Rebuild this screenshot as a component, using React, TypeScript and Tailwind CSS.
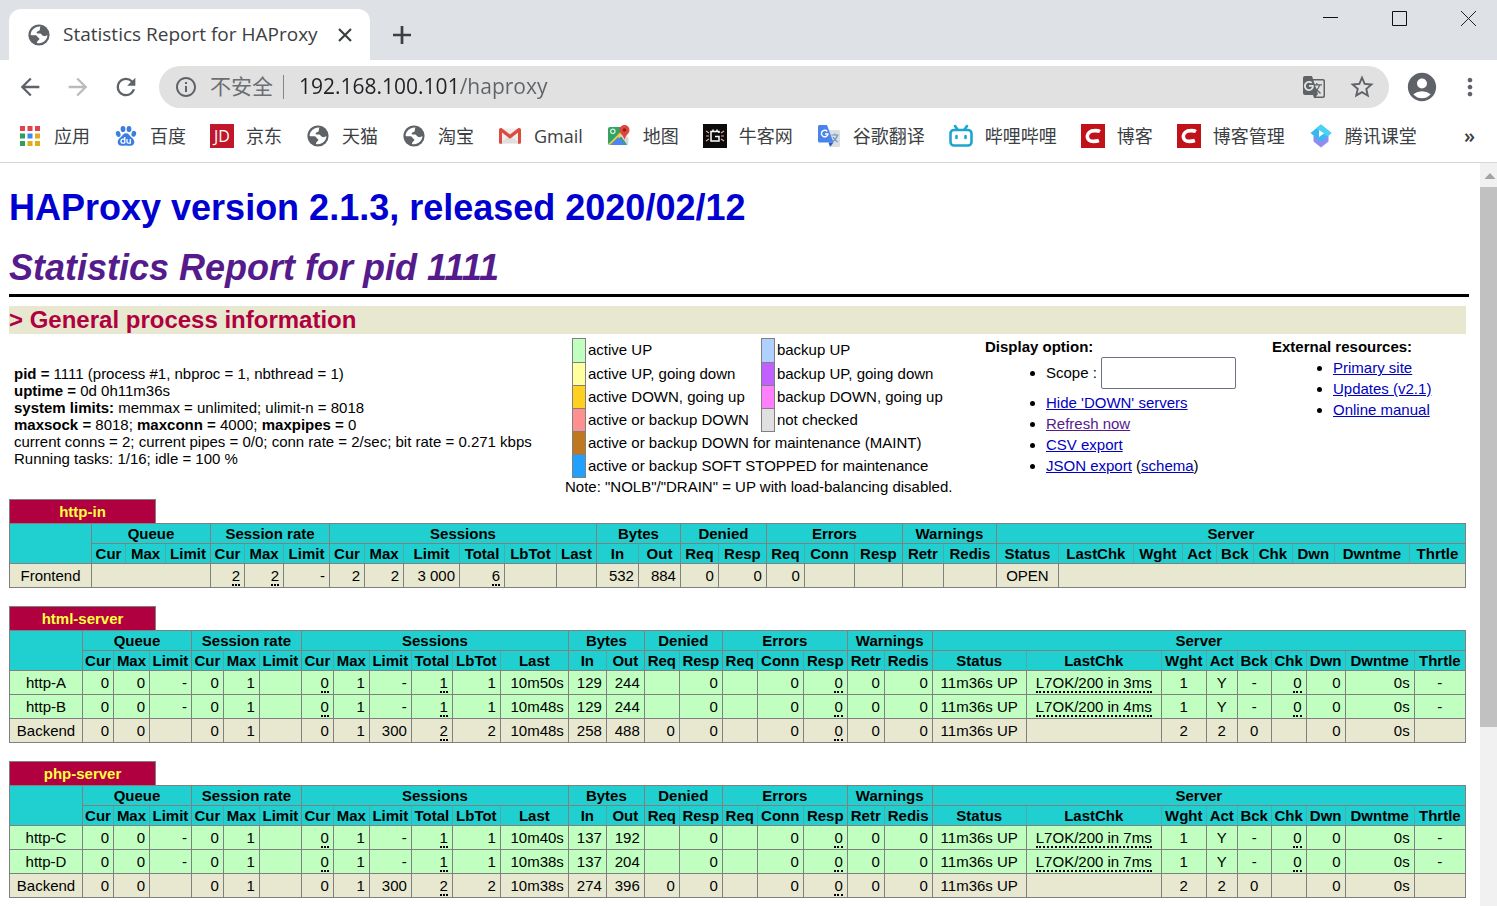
import type { ReactNode } from 'react';
import {
  MdArrowBack,
  MdArrowForward,
  MdAccountCircle,
  MdGTranslate,
  MdInfoOutline,
  MdMoreVert,
  MdRefresh,
  MdStarBorder,
} from 'react-icons/md';

interface Bookmark {
  label: string;
  icon: ReactNode;
}

interface Cell {
  text?: string;
  span?: number;
  center?: boolean;
  tip?: boolean;
}

interface Row {
  name: string;
  up: boolean;
  cells: Cell[];
}

interface Proxy {
  name: string;
  widths: number[];
  rows: Row[];
}

const headerGroups = [
  { label: 'Queue', cols: ['Cur', 'Max', 'Limit'] },
  { label: 'Session rate', cols: ['Cur', 'Max', 'Limit'] },
  { label: 'Sessions', cols: ['Cur', 'Max', 'Limit', 'Total', 'LbTot', 'Last'] },
  { label: 'Bytes', cols: ['In', 'Out'] },
  { label: 'Denied', cols: ['Req', 'Resp'] },
  { label: 'Errors', cols: ['Req', 'Conn', 'Resp'] },
  { label: 'Warnings', cols: ['Retr', 'Redis'] },
  { label: 'Server', cols: ['Status', 'LastChk', 'Wght', 'Act', 'Bck', 'Chk', 'Dwn', 'Dwntme', 'Thrtle'] },
];

// relative column widths, turned into percentages in StatsTable
const frontendWidths = [
  82, 34, 40, 45, 34, 39, 46, 35, 39, 56, 45, 52, 40, 42, 42, 38, 48, 38, 50, 48, 41, 53, 62, 75, 49, 34, 37, 39, 42, 75, 56,
];
const serverWidths = [
  73, 31, 36, 42, 32, 36, 42, 32, 36, 42, 41, 48, 68, 38, 38, 35, 43, 35, 46, 44, 37, 48, 94, 135, 45, 31, 34, 35, 39, 69, 51,
];

const n = (text = ''): Cell => ({ text });
const c = (text = ''): Cell => ({ text, center: true });
const tip = (text: string): Cell => ({ text, tip: true });

function serverRow(name: string, last: string, bytesIn: string, bytesOut: string, check: string): Row {
  return {
    name,
    up: true,
    cells: [
      n('0'), n('0'), n('-'), n('0'), n('1'), n(),
      tip('0'), n('1'), n('-'), tip('1'), n('1'), n(last),
      n(bytesIn), n(bytesOut), n(), n('0'), n(), n('0'), tip('0'), n('0'), n('0'),
      c('11m36s UP'), { text: check, center: true, tip: true }, c('1'), c('Y'), c('-'), tip('0'), n('0'), n('0s'), c('-'),
    ],
  };
}

function backendRow(last: string, bytesIn: string, bytesOut: string): Row {
  return {
    name: 'Backend',
    up: false,
    cells: [
      n('0'), n('0'), n(), n('0'), n('1'), n(),
      n('0'), n('1'), n('300'), tip('2'), n('2'), n(last),
      n(bytesIn), n(bytesOut), n('0'), n('0'), n(), n('0'), tip('0'), n('0'), n('0'),
      c('11m36s UP'), c(), c('2'), c('2'), c('0'), n(), n('0'), n('0s'), c(),
    ],
  };
}

const proxies: Proxy[] = [
  {
    name: 'http-in',
    widths: frontendWidths,
    rows: [
      {
        name: 'Frontend',
        up: false,
        cells: [
          { span: 3 }, tip('2'), tip('2'), n('-'), n('2'), n('2'), n('3 000'), tip('6'), n(), n(),
          n('532'), n('884'), n('0'), n('0'), n('0'), n(), n(), n(), n(), c('OPEN'), { span: 8 },
        ],
      },
    ],
  },
  {
    name: 'html-server',
    widths: serverWidths,
    rows: [
      serverRow('http-A', '10m50s', '129', '244', 'L7OK/200 in 3ms'),
      serverRow('http-B', '10m48s', '129', '244', 'L7OK/200 in 4ms'),
      backendRow('10m48s', '258', '488'),
    ],
  },
  {
    name: 'php-server',
    widths: serverWidths,
    rows: [
      serverRow('http-C', '10m40s', '137', '192', 'L7OK/200 in 7ms'),
      serverRow('http-D', '10m38s', '137', '204', 'L7OK/200 in 7ms'),
      backendRow('10m38s', '274', '396'),
    ],
  },
];

function GlobeIcon() {
  return (
    <svg viewBox="0 0 24 24" className="size-6 shrink-0">
      <circle cx="12" cy="12" r="10.600" fill="#5f6368" />
      <path
        d="M13.500 3.600c-5 -.6-9.700 3.300-9.900 8.300 1.800.5 3.500.2 5.200.4 1.500.2 1.300 1.900 2.600 2.400 1.200.5 1.300 1.500.3 2.300-1.200.9-1.900 1.900-1.700 3.100 5.500 1.200 10.300-2.800 10.400-8-1.300.7-2.300 1.500-3.900 1-1.700-.5-1.800-2.100-3.300-2.500-1.500-.4-3.200.3-3.500-.9-.3-1.300 1.500-1.300 2.500-1.900 1.300-.8.200-2.700 1.300-4.200z"
        fill="#fff"
      />
    </svg>
  );
}

function AppsIcon() {
  const colors = ['#e0434b', '#e0434b', '#e0434b', '#2e9e5b', '#3b8beb', '#dfae1c', '#2e9e5b', '#dfae1c', '#dfae1c'];
  return (
    <svg viewBox="0 0 20 20" className="size-5">
      {colors.map((color, i) => (
        <rect key={i} x={(i % 3) * 7.5} y={Math.floor(i / 3) * 7.5} width="5" height="5" fill={color} />
      ))}
    </svg>
  );
}

function BaiduIcon() {
  return (
    <svg viewBox="0 0 24 24" className="size-6">
      <g fill="#3b7de0">
        <ellipse cx="4.2" cy="10" rx="2.3" ry="3" transform="rotate(-15 4.2 10)" />
        <ellipse cx="9" cy="5" rx="2.4" ry="3.1" />
        <ellipse cx="15" cy="5" rx="2.4" ry="3.1" />
        <ellipse cx="19.8" cy="9.8" rx="2.3" ry="3" transform="rotate(15 19.8 9.8)" />
        <path d="M12 9.3c-2.4 0-3.5 2.2-5 3.7-1.700 1.500-3.500 2.700-3.300 5.200.2 2.400 2 3.700 4.200 3.600 1.500 0 2.600-.4 4.100-.4s2.600.4 4.100.4c2.200.1 4-1.200 4.200-3.600.2-2.500-1.600-3.700-3.300-5.200-1.500-1.500-2.600-3.700-5-3.700z" />
      </g>
      <g fill="none" stroke="#fff" strokeWidth="1.300">
        <path d="M10.800 13v6.200M10.800 15.200H9a2 2 0 0 0 0 4h1.800M13 15v2.800c0 1 .5 1.400 1.300 1.400h2V15" />
      </g>
    </svg>
  );
}

function GmailIcon() {
  return (
    <svg viewBox="0 0 24 24" className="size-6">
      <path d="M2 4.500h20v15H2z" fill="#f3ecec" />
      <path d="M2 19.500 12 11l10 8.500z" fill="#e2dede" />
      <path d="M1 5.800C1 4.800 1.800 4 2.800 4h.7L12 10.500 20.500 4h.7c1 0 1.800.8 1.800 1.800v12.400c0 1-.6 1.600-1.400 1.600H20V8.600l-8 6.100-8-6.100v11.200H2.400c-.8 0-1.400-.6-1.400-1.600z" fill="#dc4b40" />
    </svg>
  );
}

function MapsIcon() {
  return (
    <svg viewBox="0 0 24 24" className="size-6">
      <path d="M3 3h13l-2 6 7 5v5a2 2 0 0 1-2 2H3a2 2 0 0 1-2-2V5a2 2 0 0 1 2-2z" fill="#34a264" />
      <path d="M3 21h16L11 12z" fill="#4a86ee" />
      <path d="M1.500 20 15.500 6l3 3L4 21H3z" fill="#f3cb3f" />
      <path d="m3 21 8-8 8 8z" fill="#4a86ee" />
      <path d="m13 11 7 9.500a2 2 0 0 0 1.500-2V14l-5-5z" fill="#d7dadd" />
      <circle cx="5.800" cy="7.300" r="2.200" fill="none" stroke="#d9f2df" strokeWidth="1.200" />
      <path d="M17.500 1a5 5 0 0 0-5 5c0 3.700 4 5 5 10 1-5 5-6.300 5-10a5 5 0 0 0-5-5z" fill="#e0463c" />
      <circle cx="17.500" cy="6" r="1.800" fill="#8c1f19" />
    </svg>
  );
}

function NowcoderIcon() {
  return (
    <svg viewBox="0 0 24 24" className="size-6">
      <path d="M0 0h24v24H0z" fill="#0b0b0b" />
      <g fill="none" stroke="#fff" strokeWidth="1.500">
        <path d="M16 9V7.500H8V17h8v-4.500h-4M10 5.500v2M14 5.500v2" />
      </g>
      <g fill="none" stroke="#e8a9a0" strokeWidth="1.200">
        <path d="m3 7 3 2M6 12H3M6 15l-3 2M21 7l-3 2M21 12h-3M21 17l-3-2" />
      </g>
    </svg>
  );
}

function TranslateIcon() {
  return (
    <svg viewBox="0 0 24 24" className="size-6">
      <path d="M9 6h12.500c.8 0 1.500.7 1.500 1.500v14c0 .8-.7 1.500-1.500 1.500H14z" fill="#dcdfe2" />
      <path d="M14.500 11h7M18 9.500V11M20.500 11c-.6 2.600-2.500 5-4.800 6.500M16 13c1 2 2.700 3.800 4.700 5" fill="none" stroke="#6f95bd" strokeWidth="1.200" />
      <path d="m11.500 18.500 5 0-3.500 4.500z" fill="#2c56c0" />
      <path d="M2.500 1H10l6.500 17.500h-14C1.700 18.500 1 17.800 1 17V2.500C1 1.700 1.700 1 2.500 1z" fill="#4a83ea" />
      <path d="M10.300 7.400A3.300 3.300 0 1 0 11 10H8" fill="none" stroke="#fff" strokeWidth="1.400" />
    </svg>
  );
}

function BilibiliIcon() {
  return (
    <svg viewBox="0 0 24 24" className="size-6" fill="none" stroke="#1ea5cf" strokeWidth="2.600" strokeLinecap="round">
      <rect x="1.500" y="6" width="21" height="15.500" rx="3.500" />
      <path d="m6 2 2.500 3.500M18 2l-2.500 3.500M7.500 12v2M16.500 12v2" />
    </svg>
  );
}

function CsdnIcon() {
  return (
    <svg viewBox="0 0 24 24" className="size-6">
      <path d="M0 0h24v24H0z" fill="#c1121a" />
      <path d="M19 7.500c-1.500-.8-3.500-1-5.500-.9-4.300.1-7 2.600-7.200 5.600-.2 3.400 2.500 5.200 6.200 5.200 2 0 3.800-.3 5.400-.9" fill="none" stroke="#fff" strokeWidth="3.600" />
    </svg>
  );
}

function KetangIcon() {
  return (
    <svg viewBox="0 0 24 24" className="size-6">
      <path d="M4.500 12v5.500l7.500 6 7.500-6V12z" fill="#8f8cf2" />
      <path d="M12 .500 22.500 9 12 18 1.500 9z" fill="#36b9f2" />
      <path d="M12 .500 22.500 9l-4 3.500L7 4.500z" fill="#47d3f3" />
      <path d="m10 6 5 3.500-5 3.500z" fill="#fff" />
    </svg>
  );
}

function JdIcon() {
  return (
    <span className="flex size-6 items-center justify-center bg-[#c0172b] font-['Open_Sans',sans-serif] text-base font-medium text-white">
      JD
    </span>
  );
}

const bookmarks: Bookmark[] = [
  { label: '应用', icon: <AppsIcon /> },
  { label: '百度', icon: <BaiduIcon /> },
  { label: '京东', icon: <JdIcon /> },
  { label: '天猫', icon: <GlobeIcon /> },
  { label: '淘宝', icon: <GlobeIcon /> },
  { label: 'Gmail', icon: <GmailIcon /> },
  { label: '地图', icon: <MapsIcon /> },
  { label: '牛客网', icon: <NowcoderIcon /> },
  { label: '谷歌翻译', icon: <TranslateIcon /> },
  { label: '哔哩哔哩', icon: <BilibiliIcon /> },
  { label: '博客', icon: <CsdnIcon /> },
  { label: '博客管理', icon: <CsdnIcon /> },
  { label: '腾讯课堂', icon: <KetangIcon /> },
];

function TabStrip() {
  return (
    <div className="flex h-15 items-end justify-between bg-[#dee1e5]">
      <div className="flex items-center">
        <div className="ml-[9px] flex h-[51px] w-[361px] items-center rounded-t-xl bg-white pl-[18px] pr-[18px]">
          <GlobeIcon />
          <span className="ml-3 flex-1 whitespace-nowrap text-[19px] text-[#3c4043]">Statistics Report for HAProxy</span>
          <button aria-label="Close tab" className="text-[#3c4043]">
            <svg viewBox="0 0 14 14" className="size-[14px]" stroke="currentColor" strokeWidth="2.200">
              <path d="m1 1 12 12M13 1 1 13" />
            </svg>
          </button>
        </div>
        <button aria-label="New tab" className="ml-[23px] text-[#3c4043]">
          <svg viewBox="0 0 18 18" className="size-[18px]" stroke="currentColor" strokeWidth="2.700">
            <path d="M9 0v18M0 9h18" />
          </svg>
        </button>
      </div>
      <div className="flex gap-[54px] self-start pr-[21px] pt-[11px]">
        <button aria-label="Minimize">
          <svg viewBox="0 0 15 15" className="size-[15px]" stroke="#111"><path d="M0 6.500h15" /></svg>
        </button>
        <button aria-label="Maximize">
          <svg viewBox="0 0 15 15" className="size-[15px]" fill="none" stroke="#111"><path d="M.5.5h14v14H.5z" /></svg>
        </button>
        <button aria-label="Close window">
          <svg viewBox="0 0 15 15" className="size-[15px]" stroke="#222"><path d="m0 0 15 15M15 0 0 15" /></svg>
        </button>
      </div>
    </div>
  );
}

function Toolbar() {
  return (
    <div className="flex h-[54px] items-center pl-4 pr-[13px] text-[#5f6368]">
      <button aria-label="Back" className="mr-5"><MdArrowBack className="size-7" /></button>
      <button aria-label="Forward" className="mr-5 text-[#b9bbbe]"><MdArrowForward className="size-7" /></button>
      <button aria-label="Reload" className="mr-[19px]"><MdRefresh className="size-7" /></button>
      <div className="flex h-[42px] flex-1 items-center rounded-full bg-[#e1e1e1] pl-[15px] pr-[13px] text-[21px]">
        <MdInfoOutline className="size-6" />
        <label htmlFor="address" className="ml-3 whitespace-nowrap text-[#6b6e72]">不安全</label>
        <span className="ml-[10px] mr-[15px] h-6 w-px bg-[#80868b]" />
        {/* host part is dark, path part is grey */}
        <input
          id="address"
          defaultValue="192.168.100.101/haproxy"
          className="min-w-0 flex-1 bg-linear-to-r from-[#202124] from-[161px] to-[#5f6368] to-[161px] bg-clip-text text-transparent caret-black outline-none"
        />
        <button aria-label="Translate this page" className="mr-[22px]"><MdGTranslate className="size-6" /></button>
        <button aria-label="Bookmark this page"><MdStarBorder className="size-7" /></button>
      </div>
      <button aria-label="Profile" className="ml-4"><MdAccountCircle className="size-[34px]" /></button>
      <button aria-label="Menu" className="ml-[17px]"><MdMoreVert className="size-7" /></button>
    </div>
  );
}

function BookmarkBar() {
  return (
    <nav className="flex h-[49px] items-center border-b border-[#d5d7da] pb-[5px] pl-[18px] pr-[22px] text-lg text-[#3c4043]">
      <div className="flex flex-1 gap-6 overflow-hidden whitespace-nowrap">
        {bookmarks.map((item) => (
          <a key={item.label} href="#" className="flex items-center gap-3">
            <span className="flex size-6 items-center justify-center">{item.icon}</span>
            {item.label}
          </a>
        ))}
      </div>
      <button aria-label="More bookmarks" className="text-xl font-semibold">»</button>
    </nav>
  );
}

function ProcessInfo() {
  return (
    <div className="self-center pb-[2px] pl-[5px] leading-[17px]">
      <p><b>pid = </b>1111 (process #1, nbproc = 1, nbthread = 1)</p>
      <p><b>uptime = </b>0d 0h11m36s</p>
      <p><b>system limits:</b> memmax = unlimited; ulimit-n = 8018</p>
      <p><b>maxsock = </b>8018; <b>maxconn = </b>4000; <b>maxpipes = </b>0</p>
      <p>current conns = 2; current pipes = 0/0; conn rate = 2/sec; bit rate = 0.271 kbps</p>
      <p>Running tasks: 1/16; idle = 100 %</p>
    </div>
  );
}

const legend = [
  [{ color: 'bg-[#c0ffc0]', label: 'active UP' }, { color: 'bg-[#b0d0ff]', label: 'backup UP' }],
  [{ color: 'bg-[#ffffa0]', label: 'active UP, going down' }, { color: 'bg-[#c060ff]', label: 'backup UP, going down' }],
  [{ color: 'bg-[#ffd020]', label: 'active DOWN, going up' }, { color: 'bg-[#ff80ff]', label: 'backup DOWN, going up' }],
  [{ color: 'bg-[#ff9090]', label: 'active or backup DOWN' }, { color: 'bg-[#e0e0e0]', label: 'not checked' }],
  [{ color: 'bg-[#c07820]', label: 'active or backup DOWN for maintenance (MAINT)' }],
  [{ color: 'bg-[#20a0ff]', label: 'active or backup SOFT STOPPED for maintenance' }],
];

function Legend() {
  return (
    <div className="pt-1">
      <table className="ml-[7px] border-collapse">
        <tbody>
          {legend.map((row) => (
            <tr key={row[0].label} className="h-[23px] first:h-6">
              {row.map((entry) => [
                <td key={entry.color} className={`w-[13px] min-w-[13px] border border-[#808080] ${entry.color}`} />,
                <td key={entry.label} colSpan={row.length === 1 ? 3 : 1} className="pl-[2px] pr-3">
                  {entry.label}
                </td>,
              ])}
            </tr>
          ))}
        </tbody>
      </table>
      <p className="leading-[18px]">Note: "NOLB"/"DRAIN" = UP with load-balancing disabled.</p>
    </div>
  );
}

function StatsTable({ proxy }: { proxy: Proxy }) {
  const total = proxy.widths.reduce((sum, w) => sum + w, 0);

  return (
    <section className="mb-[18px]">
      <h4 className="flex h-6 w-[147px] items-center justify-center border border-b-0 border-[#808080] bg-[#b00040] pt-[2px] font-bold text-[#ffff40]">
        {proxy.name}
      </h4>
      <table className="w-full table-fixed border-collapse whitespace-nowrap">
        <colgroup>
          {proxy.widths.map((w, i) => (
            <col key={i} style={{ width: `${(w / total) * 100}%` }} />
          ))}
        </colgroup>
        <thead className="bg-[#20d0d0]">
          <tr className="h-5">
            <th rowSpan={2} className="border border-[#808080]" />
            {headerGroups.map((group) => (
              <th key={group.label} colSpan={group.cols.length} className="border border-[#808080] p-0 leading-4">
                {group.label}
              </th>
            ))}
          </tr>
          <tr className="h-5">
            {headerGroups.map((group) =>
              group.cols.map((col, i) => (
                <th
                  key={group.label + col}
                  className={`border border-[#808080] p-0 leading-4 ${i < group.cols.length - 1 ? 'border-r-[#50a8a8]' : ''}`}
                >
                  {col}
                </th>
              ))
            )}
          </tr>
        </thead>
        <tbody>
          {proxy.rows.map((row) => (
            <tr key={row.name} className={`h-6 ${row.up ? 'bg-[#c0ffc0]' : 'bg-[#e8e8d0]'}`}>
              <td className="border border-[#808080] p-0 text-center leading-5">{row.name}</td>
              {row.cells.map((cell, i) => (
                <td
                  key={i}
                  colSpan={cell.span}
                  className={`border border-[#808080] leading-5 ${cell.center ? 'text-center' : 'pr-1 text-right'}`}
                >
                  {cell.tip ? (
                    <span className="border-b-2 border-dotted border-black leading-4">{cell.text}</span>
                  ) : (
                    cell.text
                  )}
                </td>
              ))}
            </tr>
          ))}
        </tbody>
      </table>
    </section>
  );
}

function Scrollbar() {
  return (
    <div className="flex w-[17px] shrink-0 flex-col items-center bg-[#f1f1f1]">
      <svg viewBox="0 0 17 24" className="h-6 w-[17px]" fill="#a3a3a3"><path d="m10 10 5.500 6h-11z" /></svg>
      <div className="h-[540px] w-full bg-[#c1c1c1]" />
    </div>
  );
}

export default function App() {
  return (
    <div className="flex h-screen flex-col overflow-hidden bg-white font-['Open_Sans','Noto_Sans_CJK_SC',sans-serif]">
      <TabStrip />
      <Toolbar />
      <BookmarkBar />
      <div className="flex min-h-0 flex-1">
        <main className="min-w-0 flex-1 overflow-hidden pl-[9px] pr-[11px] pt-[21px] font-['Liberation_Sans',Arial,sans-serif] text-[15px] text-black">
          <h1 className="text-4xl font-bold leading-12 text-[#0000d0]">
            <a href="#">HAProxy version 2.1.3, released 2020/02/12</a>
          </h1>
          <h2 className="mt-3 text-4xl font-bold italic leading-12 text-[#551a8b]">
            <a href="#">Statistics Report for pid 1111</a>
          </h2>
          <hr className="mt-[2px] border-t-3 border-black" />
          <div className="pr-[3px]">
            <h3 className="mt-[9px] bg-[#e8e8d0] text-2xl font-bold leading-7 text-[#b00040]">&gt; General process information</h3>
            <div className="grid h-[165px] grid-cols-[556fr_420fr_287fr_194fr] whitespace-nowrap">
              <ProcessInfo />
              <Legend />
              <div className="pt-[3px]">
                <b className="block leading-5">Display option:</b>
                <ul className="list-disc pl-[61px] leading-[21px] text-[#0000c0]">
                  <li className="text-black">
                    <label htmlFor="scope">Scope : </label>
                    <input id="scope" className="mb-[3px] h-8 w-[135px] rounded-xs border border-gray-500 bg-white px-1 align-middle" />
                  </li>
                  <li className="marker:text-black"><a href="#" className="underline">Hide 'DOWN' servers</a></li>
                  <li className="marker:text-black"><a href="#" className="text-[#551a8b] underline">Refresh now</a></li>
                  <li className="marker:text-black"><a href="#" className="underline">CSV export</a></li>
                  <li className="text-black">
                    <a href="#" className="text-[#0000c0] underline">JSON export</a> (<a href="#" className="text-[#0000c0] underline">schema</a>)
                  </li>
                </ul>
              </div>
              <div className="pt-[3px]">
                <b className="block leading-5">External resources:</b>
                <ul className="list-disc pl-[61px] leading-[21px] text-[#0000c0] marker:text-black">
                  <li><a href="#" className="underline">Primary site</a></li>
                  <li><a href="#" className="underline">Updates (v2.1)</a></li>
                  <li><a href="#" className="underline">Online manual</a></li>
                </ul>
              </div>
            </div>
            {proxies.map((proxy) => (
              <StatsTable key={proxy.name} proxy={proxy} />
            ))}
          </div>
        </main>
        <Scrollbar />
      </div>
    </div>
  );
}
